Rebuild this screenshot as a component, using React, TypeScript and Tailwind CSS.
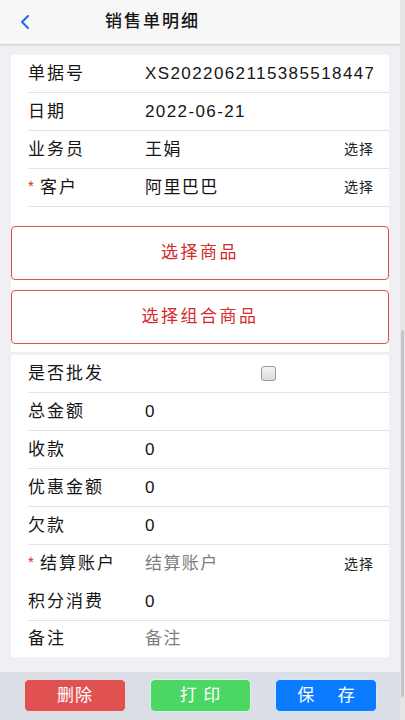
import React from "react";

const FONT = { fontFamily: '"Liberation Sans","Noto Sans CJK SC",sans-serif' };

function Row({
  label,
  value,
  required,
  select,
  placeholder,
  divider = true,
  h = "h-[38px]",
  children,
}: {
  label: string;
  value?: string;
  required?: boolean;
  select?: boolean;
  placeholder?: boolean;
  divider?: boolean;
  h?: string;
  children?: React.ReactNode;
}) {
  return (
    <div
      className={`ml-[17px] flex items-center ${h} ${divider ? "border-b border-[#e3e3e6]" : ""}`}
    >
      <div className="w-[117px] shrink-0 flex items-center text-[17px] tracking-[2px] text-[#151515]">
        {required && (
          <span className="text-[#e02020] text-[15px] w-[12px] -mt-[3px] tracking-normal">*</span>
        )}
        <span>{label}</span>
      </div>
      <div
        className={`flex-1 min-w-0 overflow-hidden whitespace-nowrap text-[17px] tracking-[1.4px] ${
          placeholder ? "text-[#7d7d7d]" : "text-[#151515]"
        } mr-[16px]`}
      >
        {value}
        {children}
      </div>
      {select && (
        <div className="w-[50px] shrink-0 text-[14px] tracking-[1px] text-[#222] pr-[15px] text-right">
          选择
        </div>
      )}
    </div>
  );
}

export default function App() {
  return (
    <div className="relative w-[405px] h-[720px] overflow-hidden bg-[#efeff4]" style={FONT}>
      <div className="w-[400px] h-full flex flex-col">
        <div className="h-[45px] shrink-0 bg-[#f7f7f7] border-b border-[#d4d4d4] flex items-center shadow-[0_1px_2px_rgba(0,0,0,0.06)]">
          <svg width="10" height="16" viewBox="0 0 10 16" className="ml-[20px]">
            <path d="M8 2 L2 8 L8 14" fill="none" stroke="#1a6cf2" strokeWidth="2" strokeLinecap="round" strokeLinejoin="round" />
          </svg>
          <div className="ml-[75px] text-[17px] font-medium tracking-[2px] text-[#151515]">销售单明细</div>
        </div>

        <div className="px-[11px] pt-[10px]">
          <div className="bg-white pb-[8px]">
            <Row label="单据号" value="XS20220621153855184477" />
            <Row label="日期" value="2022-06-21" />
            <Row label="业务员" value="王娟" select />
            <Row label="客户" value="阿里巴巴" required select />
            <div className="mt-[19px] h-[54px] border border-[#d9534f] rounded-[4px] flex items-center justify-center text-[17px] tracking-[2.5px] text-[#d42a2a]">
              选择商品
            </div>
            <div className="mt-[10px] h-[54px] border border-[#d9534f] rounded-[4px] flex items-center justify-center text-[17px] tracking-[2.5px] text-[#d42a2a]">
              选择组合商品
            </div>
          </div>

          <div className="mt-[3px] bg-white">
            <Row label="是否批发">
              <div className="ml-[116px] w-[15px] h-[15px] rounded-[3px] border border-[#9a9a9a] bg-gradient-to-b from-[#f4f4f4] to-[#dcdcdc]" />
            </Row>
            <Row label="总金额" value="0" />
            <Row label="收款" value="0" />
            <Row label="优惠金额" value="0" />
            <Row label="欠款" value="0" />
            <Row label="结算账户" value="结算账户" required select placeholder divider={false} />
            <Row label="积分消费" value="0" />
            <Row label="备注" value="备注" placeholder divider={false} h="h-[36px]" />
          </div>
        </div>

        <div className="flex-1" />

        <div className="h-[48px] shrink-0 bg-[#d9dee7] flex items-start pt-[7px] pl-[24px] gap-[24px]">
          <div className="w-[102px] h-[33px] rounded-[5px] bg-[#e05252] border border-[#f3d6d6] flex items-center justify-center text-white text-[17px] tracking-[1px]">
            删除
          </div>
          <div className="w-[101px] h-[33px] rounded-[5px] bg-[#4cd764] border border-[#d8f3dd] flex items-center justify-center text-white text-[17px] tracking-[1px]">
            打 印
          </div>
          <div className="w-[102px] h-[33px] rounded-[5px] bg-[#0a7aff] border border-[#d3e6ff] flex items-center justify-center text-white text-[17px] whitespace-pre">
            保{"     "}存
          </div>
        </div>
      </div>

      <div className="absolute top-0 right-0 w-[5px] h-full bg-[#e6e6e8]">
        <div className="absolute right-[1px] top-[330px] w-[3px] h-[367px] rounded-full bg-[#c2c4c8]" />
      </div>
    </div>
  );
}
